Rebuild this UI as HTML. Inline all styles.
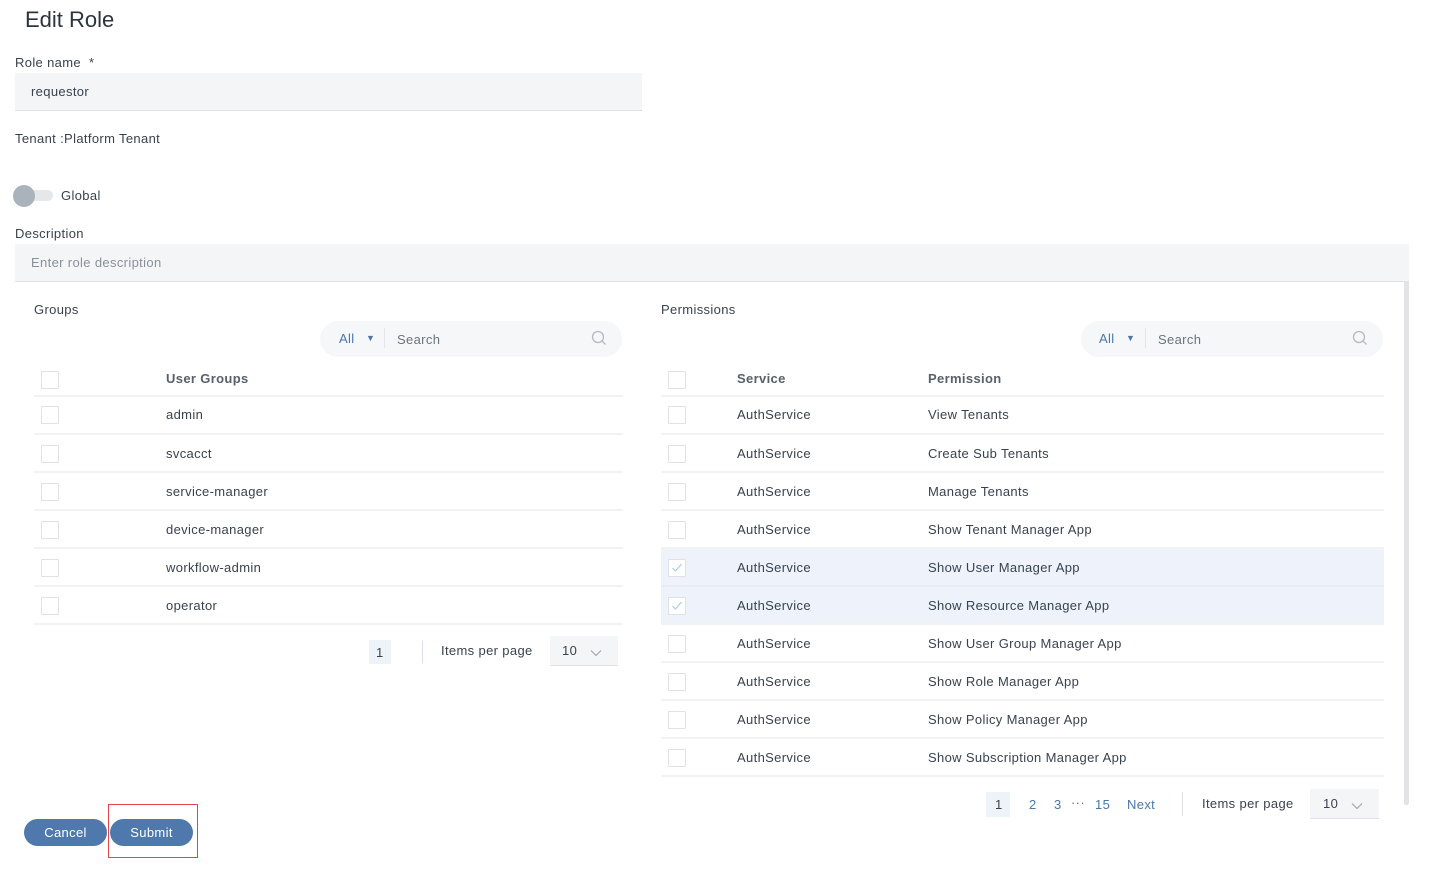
<!DOCTYPE html>
<html><head><meta charset="utf-8"><style>
*{margin:0;padding:0;box-sizing:border-box}
body{width:1430px;height:880px;background:#fff;font-family:"Liberation Sans",sans-serif;color:#39424e;position:relative;overflow:hidden;font-size:13px;letter-spacing:0.35px}
.a{position:absolute;white-space:nowrap}
.cb{position:absolute;width:18px;height:18px;border:1px solid #dfe1e4;background:#fff;border-radius:1px}
.ln{position:absolute;height:2px;background:#f1f2f4}
.t{position:absolute;font-size:13px;color:#39424e;white-space:nowrap}
.srch{position:absolute;height:36px;border-radius:18px;background:#f5f7f9}
.blue{color:#4a76ab}
</style></head><body>
<div class="a" style="left:25px;top:7px;font-size:22px;color:#2c3440;letter-spacing:0">Edit Role</div>
<div class="a" style="left:15px;top:55px">Role name&nbsp; *</div>
<div class="a" style="left:15px;top:73px;width:627px;height:38px;background:#f4f5f7;border-bottom:1px solid #dfe1e4"></div>
<div class="a" style="left:31px;top:84px">requestor</div>
<div class="a" style="left:15px;top:131px">Tenant :Platform Tenant</div>
<div class="a" style="left:20px;top:190px;width:33px;height:11px;border-radius:6px;background:#e6e7e9"></div>
<div class="a" style="left:13px;top:185px;width:22px;height:22px;border-radius:11px;background:#aab2bc"></div>
<div class="a" style="left:61px;top:188px">Global</div>
<div class="a" style="left:15px;top:226px">Description</div>
<div class="a" style="left:15px;top:244px;width:1394px;height:38px;background:#f4f5f7;border-bottom:1px solid #dfe1e4"></div>
<div class="a" style="left:31px;top:255px;color:#8a9099">Enter role description</div>
<div class="a" style="left:1404px;top:282px;width:5px;height:523px;background:#e3e4e6;border-radius:0 0 2px 2px"></div>

<div class="a" style="left:34px;top:302px">Groups</div>
<div class="srch" style="left:320px;top:321px;width:302px"></div>
<div class="a blue" style="left:339px;top:331px">All</div>
<div class="a blue" style="left:366px;top:333px;font-size:9px">▼</div>
<div class="a" style="left:384px;top:328px;width:1px;height:20px;background:#e2e4e7"></div>
<div class="a" style="left:397px;top:332px;color:#6b7380">Search</div>
<svg class="a" style="left:591px;top:330px" width="16" height="16" viewBox="0 0 16 16"><circle cx="7" cy="7" r="5.5" fill="none" stroke="#b5bac1" stroke-width="1.3"/><path d="M11 11l3.5 3.5" stroke="#b5bac1" stroke-width="1.3"/></svg>

<div class="cb" style="left:41px;top:371px"></div>
<div class="t" style="left:166px;top:371px;font-weight:bold;color:#58606b">User Groups</div>
<div class="ln" style="left:34px;top:395px;width:589px"></div>
<div class="cb" style="left:41px;top:406px"></div><div class="t" style="left:166px;top:407px">admin</div><div class="ln" style="left:34px;top:433px;width:589px"></div>
<div class="cb" style="left:41px;top:445px"></div><div class="t" style="left:166px;top:446px">svcacct</div><div class="ln" style="left:34px;top:471px;width:589px"></div>
<div class="cb" style="left:41px;top:483px"></div><div class="t" style="left:166px;top:484px">service-manager</div><div class="ln" style="left:34px;top:509px;width:589px"></div>
<div class="cb" style="left:41px;top:521px"></div><div class="t" style="left:166px;top:522px">device-manager</div><div class="ln" style="left:34px;top:547px;width:589px"></div>
<div class="cb" style="left:41px;top:559px"></div><div class="t" style="left:166px;top:560px">workflow-admin</div><div class="ln" style="left:34px;top:585px;width:589px"></div>
<div class="cb" style="left:41px;top:597px"></div><div class="t" style="left:166px;top:598px">operator</div><div class="ln" style="left:34px;top:623px;width:589px"></div>

<div class="a" style="left:369px;top:640px;width:22px;height:24px;background:#eef3f9"></div>
<div class="a" style="left:376px;top:645px">1</div>
<div class="a" style="left:422px;top:641px;width:1px;height:22px;background:#dcdfe3"></div>
<div class="a" style="left:441px;top:643px">Items per page</div>
<div class="a" style="left:550px;top:636px;width:68px;height:30px;background:#f4f5f7;border-bottom:1px solid #dfe1e4"></div>
<div class="a" style="left:562px;top:643px">10</div>
<svg class="a" style="left:590px;top:649px" width="12" height="8" viewBox="0 0 12 8"><path d="M1 1.5l5 5 5-5" fill="none" stroke="#9aa0a8" stroke-width="1"/></svg>

<div class="a" style="left:661px;top:302px">Permissions</div>
<div class="srch" style="left:1081px;top:321px;width:302px"></div>
<div class="a blue" style="left:1099px;top:331px">All</div>
<div class="a blue" style="left:1126px;top:333px;font-size:9px">▼</div>
<div class="a" style="left:1145px;top:328px;width:1px;height:20px;background:#e2e4e7"></div>
<div class="a" style="left:1158px;top:332px;color:#6b7380">Search</div>
<svg class="a" style="left:1352px;top:330px" width="16" height="16" viewBox="0 0 16 16"><circle cx="7" cy="7" r="5.5" fill="none" stroke="#b5bac1" stroke-width="1.3"/><path d="M11 11l3.5 3.5" stroke="#b5bac1" stroke-width="1.3"/></svg>

<div class="a" style="left:661px;top:548px;width:723px;height:76px;background:#eef3fb"></div>
<div class="cb" style="left:668px;top:371px"></div>
<div class="t" style="left:737px;top:371px;font-weight:bold;color:#58606b">Service</div>
<div class="t" style="left:928px;top:371px;font-weight:bold;color:#58606b">Permission</div>
<div class="ln" style="left:661px;top:395px;width:723px"></div>

<div class="cb" style="left:668px;top:406px"></div><div class="t" style="left:737px;top:407px">AuthService</div><div class="t" style="left:928px;top:407px">View Tenants</div><div class="ln" style="left:661px;top:433px;width:723px"></div>
<div class="cb" style="left:668px;top:445px"></div><div class="t" style="left:737px;top:446px">AuthService</div><div class="t" style="left:928px;top:446px">Create Sub Tenants</div><div class="ln" style="left:661px;top:471px;width:723px"></div>
<div class="cb" style="left:668px;top:483px"></div><div class="t" style="left:737px;top:484px">AuthService</div><div class="t" style="left:928px;top:484px">Manage Tenants</div><div class="ln" style="left:661px;top:509px;width:723px"></div>
<div class="cb" style="left:668px;top:521px"></div><div class="t" style="left:737px;top:522px">AuthService</div><div class="t" style="left:928px;top:522px">Show Tenant Manager App</div><div class="ln" style="left:661px;top:547px;width:723px"></div>
<div class="cb" style="left:668px;top:559px"></div><svg class="a" style="left:671px;top:563px" width="12" height="10" viewBox="0 0 12 10"><path d="M1.5 5l3 3 6-7" fill="none" stroke="#a9cdf0" stroke-width="1.2"/></svg><div class="t" style="left:737px;top:560px">AuthService</div><div class="t" style="left:928px;top:560px">Show User Manager App</div><div class="ln" style="left:661px;top:585px;width:723px;background:#e6ebf3"></div>
<div class="cb" style="left:668px;top:597px"></div><svg class="a" style="left:671px;top:601px" width="12" height="10" viewBox="0 0 12 10"><path d="M1.5 5l3 3 6-7" fill="none" stroke="#a9cdf0" stroke-width="1.2"/></svg><div class="t" style="left:737px;top:598px">AuthService</div><div class="t" style="left:928px;top:598px">Show Resource Manager App</div><div class="ln" style="left:661px;top:623px;width:723px"></div>
<div class="cb" style="left:668px;top:635px"></div><div class="t" style="left:737px;top:636px">AuthService</div><div class="t" style="left:928px;top:636px">Show User Group Manager App</div><div class="ln" style="left:661px;top:661px;width:723px"></div>
<div class="cb" style="left:668px;top:673px"></div><div class="t" style="left:737px;top:674px">AuthService</div><div class="t" style="left:928px;top:674px">Show Role Manager App</div><div class="ln" style="left:661px;top:699px;width:723px"></div>
<div class="cb" style="left:668px;top:711px"></div><div class="t" style="left:737px;top:712px">AuthService</div><div class="t" style="left:928px;top:712px">Show Policy Manager App</div><div class="ln" style="left:661px;top:737px;width:723px"></div>
<div class="cb" style="left:668px;top:749px"></div><div class="t" style="left:737px;top:750px">AuthService</div><div class="t" style="left:928px;top:750px">Show Subscription Manager App</div><div class="ln" style="left:661px;top:775px;width:723px"></div>

<div class="a" style="left:986px;top:792px;width:24px;height:25px;background:#eef3f9"></div>
<div class="a" style="left:995px;top:797px">1</div>
<div class="a blue" style="left:1029px;top:797px">2</div>
<div class="a blue" style="left:1054px;top:797px">3</div>
<div class="a" style="left:1071px;top:795px;color:#6b7380">···</div>
<div class="a blue" style="left:1095px;top:797px">15</div>
<div class="a blue" style="left:1127px;top:797px">Next</div>
<div class="a" style="left:1182px;top:792px;width:1px;height:24px;background:#dcdfe3"></div>
<div class="a" style="left:1202px;top:796px">Items per page</div>
<div class="a" style="left:1310px;top:789px;width:69px;height:30px;background:#f4f5f7;border-bottom:1px solid #dfe1e4"></div>
<div class="a" style="left:1323px;top:796px">10</div>
<svg class="a" style="left:1351px;top:802px" width="12" height="8" viewBox="0 0 12 8"><path d="M1 1.5l5 5 5-5" fill="none" stroke="#9aa0a8" stroke-width="1"/></svg>

<div class="a" style="left:24px;top:819px;width:83px;height:27px;border-radius:14px;background:#4f79ac;color:#fff;text-align:center;line-height:27px">Cancel</div>
<div class="a" style="left:110px;top:819px;width:83px;height:27px;border-radius:14px;background:#4f79ac;color:#fff;text-align:center;line-height:27px">Submit</div>
<div class="a" style="left:108px;top:804px;width:90px;height:54px;border:1.5px solid #e0474c"></div>
</body></html>
